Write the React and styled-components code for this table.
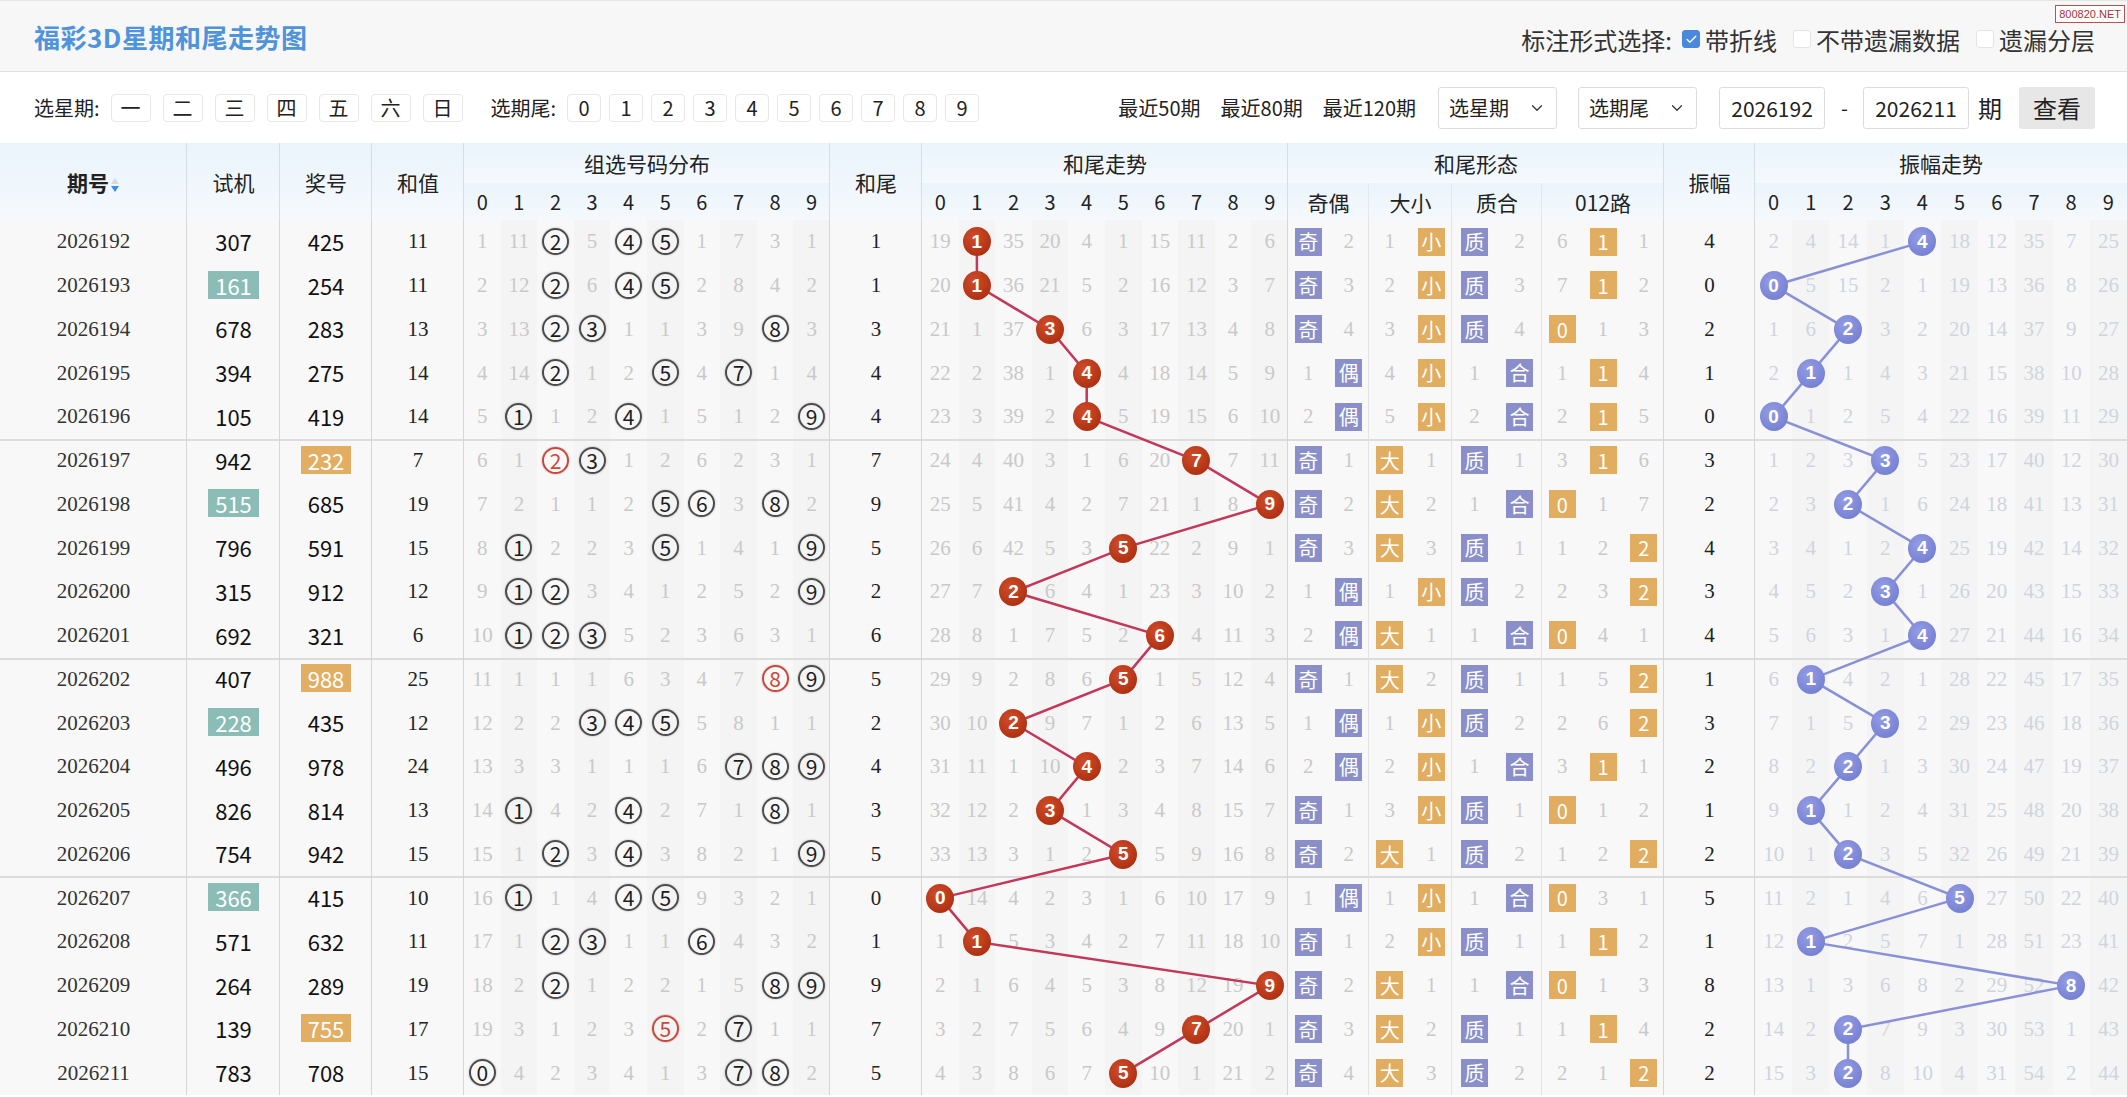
import React from "react";
import styled, { createGlobalStyle } from "styled-components";
import { ChevronDown, Check } from "lucide-react";

const GlobalStyle = createGlobalStyle`
  html, body {
    margin: 0;
    background: #ffffff;
    overflow: hidden;
  }
  body {
    font-family: "Noto Sans CJK SC", "Noto Sans", sans-serif;
    color: #333;
  }
`;

const SANS = `"Noto Sans CJK SC", "Noto Sans", sans-serif`;
const SERIF = `"Liberation Serif", "Noto Sans CJK SC", serif`;

// column widths (px) — the trend overlay uses the same numbers
const ZS_START = 922;
const ZF_START = 1755;
const ZX_W = 36.6;
const ZF_W = 37.2;
const RH = 43.75;
const H1 = 40;
const H2 = 37;

const COLS = [
  187, 93, 92, 92,
  ...Array(10).fill(ZX_W),
  92,
  ...Array(10).fill(ZX_W),
  40.5, 40.5, 41.5, 41.5, 45, 45, 40.67, 40.67, 40.66,
  91,
  ...Array(10).fill(ZF_W),
];

const RAW = [
  ["2026192", "307", "425"],
  ["2026193", "161", "254"],
  ["2026194", "678", "283"],
  ["2026195", "394", "275"],
  ["2026196", "105", "419"],
  ["2026197", "942", "232"],
  ["2026198", "515", "685"],
  ["2026199", "796", "591"],
  ["2026200", "315", "912"],
  ["2026201", "692", "321"],
  ["2026202", "407", "988"],
  ["2026203", "228", "435"],
  ["2026204", "496", "978"],
  ["2026205", "826", "814"],
  ["2026206", "754", "942"],
  ["2026207", "366", "415"],
  ["2026208", "571", "632"],
  ["2026209", "264", "289"],
  ["2026210", "139", "755"],
  ["2026211", "783", "708"],
];

const PRIME = [1, 2, 3, 5, 7];

function step(arr, hit) {
  return arr.map((m, i) => {
    if (i === hit) {
      arr[i] = 0;
      return { hit: true };
    }
    arr[i] = m + 1;
    return { miss: arr[i] };
  });
}

function buildRows() {
  const zx = [0, 10, 0, 4, 0, 0, 0, 6, 2, 0];
  const zs = [18, 0, 34, 19, 3, 0, 14, 10, 1, 5];
  const zf = [1, 3, 13, 0, 0, 17, 11, 34, 6, 24];
  const jo = [0, 1];
  const dx = [0, 0];
  const zh = [0, 1];
  const lu = [5, 0, 0];
  let prev = 5;

  return RAW.map(([id, sj, jh]) => {
    const d = jh.split("").map(Number);
    const sum = d.reduce((a, b) => a + b, 0);
    const tail = sum % 10;
    const amp = Math.abs(tail - prev);
    prev = tail;
    const group = zx.map((m, n) => {
      const c = d.filter((x) => x === n).length;
      zx[n] = c ? 0 : m + 1;
      return c ? { hit: true, red: c > 1 } : { miss: zx[n] };
    });
    return {
      id,
      sj,
      jh,
      sum,
      tail,
      amp,
      sjPair: new Set(sj).size < 3,
      jhPair: new Set(jh).size < 3,
      group,
      trend: step(zs, tail),
      jo: step(jo, tail % 2 === 1 ? 0 : 1),
      dx: step(dx, tail >= 5 ? 0 : 1),
      zh: step(zh, PRIME.includes(tail) ? 0 : 1),
      lu: step(lu, tail % 3),
      ampTrend: step(zf, amp),
    };
  });
}

const ROWS = buildRows();

/* ---------- top bars ---------- */

const Page = styled.div`
  width: 2127px;
`;

const TitleBar = styled.div`
  position: relative;
  height: 72px;
  box-sizing: border-box;
  display: flex;
  align-items: center;
  justify-content: space-between;
  padding: 0 32px 0 34px;
  background: #f7f7f7;
  border-top: 1px solid #e6e6e6;
  border-bottom: 1px solid #e2e2e2;
`;

const Title = styled.h1`
  margin: 0;
  font-family: ${SANS};
  font-size: 26px;
  font-weight: 700;
  color: #4f93da;
  letter-spacing: 0.5px;
`;

const Marks = styled.div`
  display: flex;
  align-items: center;
  font-size: 24px;
  color: #333;
  margin-top: 6px;
`;

const MarkLabel = styled.span`
  margin-right: 10px;
`;

const MarkItem = styled.label`
  display: flex;
  align-items: center;
  margin-left: 16px;
  &:first-of-type {
    margin-left: 0;
  }
`;

const Box = styled.span`
  width: 18px;
  height: 18px;
  box-sizing: border-box;
  border-radius: 3px;
  margin-right: 5px;
  display: inline-flex;
  align-items: center;
  justify-content: center;
  background: ${(p) => (p.$on ? "#4a88dc" : "#ffffff")};
  border: 1px solid ${(p) => (p.$on ? "#4a88dc" : "#e4e4e4")};
`;

const Badge = styled.span`
  position: absolute;
  top: 4px;
  right: 2px;
  padding: 0 3px;
  font-family: "Liberation Sans", sans-serif;
  font-size: 11px;
  line-height: 16px;
  color: #a9322f;
  background: #fff;
  border: 1px solid #c0504d;
`;

const ControlBar = styled.div`
  height: 71px;
  display: flex;
  align-items: center;
  padding: 0 32px 0 34px;
  background: #fff;
  font-size: 20px;
  color: #222;
`;

const Label = styled.span`
  margin-right: 11px;
  margin-left: ${(p) => p.$gap || 0}px;
`;

const PickBtn = styled.span`
  width: ${(p) => p.$w}px;
  height: 28px;
  box-sizing: border-box;
  margin-right: ${(p) => p.$gap}px;
  display: inline-flex;
  align-items: center;
  justify-content: center;
  border: 1px solid #e6e6e6;
  border-radius: 4px;
  background: #fff;
  font-size: 20px;
  color: #222;
`;

const Spacer = styled.div`
  flex: 1;
`;

const Recent = styled.span`
  margin-left: 20px;
  font-size: 20px;
  &:first-child {
    margin-left: 0;
  }
`;

const Select = styled.div`
  width: 119px;
  height: 42px;
  box-sizing: border-box;
  margin-left: ${(p) => p.$ml}px;
  display: flex;
  align-items: center;
  justify-content: space-between;
  padding: 0 10px 0 10px;
  border: 1px solid #dcdcdc;
  border-radius: 3px;
  font-size: 20px;
  color: #222;
`;

const DateInput = styled.div`
  width: 106px;
  height: 42px;
  box-sizing: border-box;
  margin-left: ${(p) => p.$ml}px;
  display: flex;
  align-items: center;
  justify-content: center;
  border: 1px solid #dcdcdc;
  border-radius: 3px;
  font-size: 21px;
  color: #222;
`;

const Dash = styled.span`
  margin: 0 15px 0 16px;
  font-size: 20px;
`;

const Unit = styled.span`
  margin: 0 17px 0 9px;
  font-size: 24px;
`;

const ViewBtn = styled.span`
  width: 76px;
  height: 42px;
  display: inline-flex;
  align-items: center;
  justify-content: center;
  background: #e7e7e7;
  border-radius: 3px;
  font-size: 24px;
  color: #222;
`;

/* ---------- table ---------- */

const TableWrap = styled.div`
  position: relative;
  width: 2127px;
`;

const Table = styled.table`
  width: 2127px;
  table-layout: fixed;
  border-collapse: separate;
  border-spacing: 0;
`;

const HeadRow = styled.tr`
  height: ${(p) => p.$h}px;
`;

const Th = styled.th`
  padding: 0;
  font-family: ${SANS};
  font-weight: ${(p) => (p.$bold ? 700 : 400)};
  font-size: ${(p) => (p.$digit ? 20 : 21)}px;
  color: #222;
  text-align: center;
  vertical-align: middle;
  white-space: nowrap;
  background: linear-gradient(#eaf4fc, #f5f9fd);
  box-shadow: ${(p) =>
    p.$edge ? `inset -1px 0 0 ${p.$edge === "major" ? "#d7dde3" : "#e2e8ee"}` : "none"};
`;

const SortIcon = styled.svg`
  width: 10px;
  height: 16px;
  margin-left: 1px;
  vertical-align: -2px;
`;

const Tr = styled.tr`
  height: ${RH}px;
`;

const Td = styled.td`
  padding: 0;
  text-align: center;
  vertical-align: middle;
  white-space: nowrap;
  font-family: ${(p) => (p.$sans ? SANS : SERIF)};
  font-size: 21px;
  color: ${(p) => p.$color || "#222"};
  background: ${(p) => (p.$alt ? "#f4f4f4" : "#f8f8f8")};
  box-shadow: ${(p) => {
    const s = [];
    if (p.$edge === "major") s.push("inset -1px 0 0 #d6d6d6");
    if (p.$edge === "minor") s.push("inset -1px 0 0 #e3e3e3");
    if (p.$top) s.push("inset 0 2px 0 #dcdcdc");
    return s.length ? s.join(", ") : "none";
  }};
`;

const Code = styled.span`
  display: inline-block;
  padding: 0 7px;
  line-height: 28px;
  font-family: ${SANS};
  font-size: 22px;
  color: ${(p) => (p.$bg ? "#fff" : "#111")};
  background: ${(p) => p.$bg || "transparent"};
`;

const Ring = styled.span`
  display: inline-flex;
  width: 27px;
  height: 27px;
  box-sizing: border-box;
  align-items: center;
  justify-content: center;
  border-radius: 50%;
  border: 2px solid ${(p) => (p.$red ? "#c9473b" : "#4b4b4b")};
  box-shadow: 0 0 2px rgba(0, 0, 0, 0.35);
  color: ${(p) => (p.$red ? "#c9473b" : "#1d1d1d")};
  font-family: ${SANS};
  font-size: 21px;
  line-height: 1;
`;

const Ball = styled.span`
  position: relative;
  z-index: 2;
  display: inline-flex;
  width: 28px;
  height: 29px;
  align-items: center;
  justify-content: center;
  border-radius: 50%;
  color: #fff;
  font-family: "Liberation Sans", sans-serif;
  font-weight: 700;
  font-size: 19px;
  background: ${(p) =>
    p.$blue
      ? "radial-gradient(circle at 40% 35%, #939ce4, #6c78cd)"
      : "radial-gradient(circle at 40% 35%, #d04c28, #a3280d)"};
`;

const Tag = styled.span`
  display: inline-flex;
  width: 27px;
  height: 28px;
  align-items: center;
  justify-content: center;
  color: #fff;
  font-family: ${SANS};
  font-size: 20px;
  background: ${(p) => (p.$tone === "purple" ? "#8a8fca" : "#e1ad60")};
`;

const Overlay = styled.svg`
  position: absolute;
  left: 0;
  top: ${H1 + H2}px;
  z-index: 1;
  pointer-events: none;
`;

const MISS = "#c9c9c9";
const MISS_BLUE = "#cfd4de";

function SortArrows() {
  return (
    <SortIcon viewBox="0 0 10 16">
      <path d="M5 1 L9 7 L1 7 Z" fill="#d4dbe3" />
      <path d="M1 9 L9 9 L5 15 Z" fill="#3a8fe3" />
    </SortIcon>
  );
}

const digits = [0, 1, 2, 3, 4, 5, 6, 7, 8, 9];

function FormCells({ cells, labels, tone, last, top }) {
  return cells.map((c, i) => (
    <Td
      key={i}
      $top={top}
      $edge={i === cells.length - 1 ? (last ? "major" : "minor") : undefined}
      $color={MISS}
    >
      {c.hit ? <Tag $tone={tone}>{labels[i]}</Tag> : c.miss}
    </Td>
  ));
}

function App() {
  const red = ROWS.map(
    (r, i) => `${ZS_START + (r.tail + 0.5) * ZX_W},${i * RH + RH / 2}`
  ).join(" ");
  const blue = ROWS.map(
    (r, i) => `${ZF_START + (r.amp + 0.5) * ZF_W},${i * RH + RH / 2}`
  ).join(" ");

  return (
    <Page>
      <GlobalStyle />
      <TitleBar>
        <Title>福彩3D星期和尾走势图</Title>
        <Marks>
          <MarkLabel>标注形式选择:</MarkLabel>
          <MarkItem>
            <Box $on>
              <Check size={13} color="#fff" strokeWidth={2.5} />
            </Box>
            带折线
          </MarkItem>
          <MarkItem>
            <Box />
            不带遗漏数据
          </MarkItem>
          <MarkItem>
            <Box />
            遗漏分层
          </MarkItem>
        </Marks>
        <Badge>800820.NET</Badge>
      </TitleBar>

      <ControlBar>
        <Label>选星期:</Label>
        {["一", "二", "三", "四", "五", "六", "日"].map((w) => (
          <PickBtn key={w} $w={40} $gap={12}>
            {w}
          </PickBtn>
        ))}
        <Label $gap={16}>选期尾:</Label>
        {digits.map((n) => (
          <PickBtn key={n} $w={34} $gap={8}>
            {n}
          </PickBtn>
        ))}
        <Spacer />
        <Recent>最近50期</Recent>
        <Recent>最近80期</Recent>
        <Recent>最近120期</Recent>
        <Select $ml={22}>
          选星期
          <ChevronDown size={18} strokeWidth={1.6} color="#333" />
        </Select>
        <Select $ml={21}>
          选期尾
          <ChevronDown size={18} strokeWidth={1.6} color="#333" />
        </Select>
        <DateInput $ml={22}>2026192</DateInput>
        <Dash>-</Dash>
        <DateInput>2026211</DateInput>
        <Unit>期</Unit>
        <ViewBtn>查看</ViewBtn>
      </ControlBar>

      <TableWrap>
        <Table>
          <colgroup>
            {COLS.map((w, i) => (
              <col key={i} style={{ width: w }} />
            ))}
          </colgroup>
          <thead>
            <HeadRow $h={H1}>
              <Th rowSpan={2} $bold $edge="major">
                期号
                <SortArrows />
              </Th>
              <Th rowSpan={2} $edge="major">试机</Th>
              <Th rowSpan={2} $edge="major">奖号</Th>
              <Th rowSpan={2} $edge="major">和值</Th>
              <Th colSpan={10} $edge="major">组选号码分布</Th>
              <Th rowSpan={2} $edge="major">和尾</Th>
              <Th colSpan={10} $edge="major">和尾走势</Th>
              <Th colSpan={9} $edge="major">和尾形态</Th>
              <Th rowSpan={2} $edge="major">振幅</Th>
              <Th colSpan={10}>振幅走势</Th>
            </HeadRow>
            <HeadRow $h={H2}>
              {digits.map((n) => (
                <Th key={"a" + n} $digit $edge={n === 9 ? "major" : undefined}>
                  {n}
                </Th>
              ))}
              {digits.map((n) => (
                <Th key={"b" + n} $digit $edge={n === 9 ? "major" : undefined}>
                  {n}
                </Th>
              ))}
              <Th colSpan={2} $edge="minor">奇偶</Th>
              <Th colSpan={2} $edge="minor">大小</Th>
              <Th colSpan={2} $edge="minor">质合</Th>
              <Th colSpan={3} $edge="major">012路</Th>
              {digits.map((n) => (
                <Th key={"c" + n} $digit>
                  {n}
                </Th>
              ))}
            </HeadRow>
          </thead>
          <tbody>
            {ROWS.map((r, i) => {
              const top = i > 0 && i % 5 === 0;
              return (
                <Tr key={r.id}>
                  <Td $top={top} $edge="major" $color="#333">
                    {r.id}
                  </Td>
                  <Td $top={top} $edge="major">
                    <Code $bg={r.sjPair ? "#8bbcb6" : undefined}>{r.sj}</Code>
                  </Td>
                  <Td $top={top} $edge="major">
                    <Code $bg={r.jhPair ? "#e1ae63" : undefined}>{r.jh}</Code>
                  </Td>
                  <Td $top={top} $edge="major">
                    {r.sum}
                  </Td>
                  {r.group.map((c, n) => (
                    <Td
                      key={"g" + n}
                      $top={top}
                      $alt={n % 2 === 1}
                      $edge={n === 9 ? "major" : undefined}
                      $color={MISS}
                    >
                      {c.hit ? <Ring $red={c.red}>{n}</Ring> : c.miss}
                    </Td>
                  ))}
                  <Td $top={top} $edge="major">
                    {r.tail}
                  </Td>
                  {r.trend.map((c, n) => (
                    <Td
                      key={"t" + n}
                      $top={top}
                      $alt={n % 2 === 1}
                      $edge={n === 9 ? "major" : undefined}
                      $color={MISS}
                    >
                      {c.hit ? <Ball>{n}</Ball> : c.miss}
                    </Td>
                  ))}
                  <FormCells cells={r.jo} labels={["奇", "偶"]} tone="purple" top={top} />
                  <FormCells cells={r.dx} labels={["大", "小"]} tone="orange" top={top} />
                  <FormCells cells={r.zh} labels={["质", "合"]} tone="purple" top={top} />
                  <FormCells cells={r.lu} labels={["0", "1", "2"]} tone="orange" top={top} last />
                  <Td $top={top} $edge="major">
                    {r.amp}
                  </Td>
                  {r.ampTrend.map((c, n) => (
                    <Td
                      key={"z" + n}
                      $top={top}
                      $alt={n % 2 === 1}
                      $color={MISS_BLUE}
                    >
                      {c.hit ? <Ball $blue>{n}</Ball> : c.miss}
                    </Td>
                  ))}
                </Tr>
              );
            })}
          </tbody>
        </Table>
        <Overlay width="2127" height={ROWS.length * RH}>
          <polyline points={red} fill="none" stroke="#c2375a" strokeWidth="2.5" />
          <polyline points={blue} fill="none" stroke="#8891d8" strokeWidth="2.5" />
        </Overlay>
      </TableWrap>
    </Page>
  );
}

export default App;
